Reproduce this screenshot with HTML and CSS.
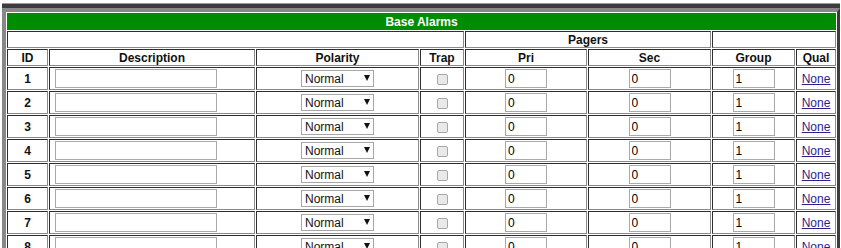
FILE: index.html
```html
<!DOCTYPE html>
<html lang="en">
<head>
    <meta charset="UTF-8">
    <title>Base Alarms</title>
    <link rel="stylesheet" href="styles.css">
</head>
<body>
    <div class="panel">
        <table class="alarms">
            <colgroup>
                <col class="c-id">
                <col class="c-desc">
                <col class="c-pol">
                <col class="c-trap">
                <col class="c-pri">
                <col class="c-sec">
                <col class="c-group">
                <col class="c-qual">
            </colgroup>
            <!-- Headers -->
            <tr class="head">
                <th colspan="8" class="title">Base Alarms</th>
            </tr>
            <tr class="head">
                <th colspan="4"></th>
                <th colspan="2">Pagers</th>
                <th colspan="2"></th>
            </tr>
            <tr class="head">
                <th>ID</th>
                <th>Description</th>
                <th>Polarity</th>
                <th>Trap</th>
                <th>Pri</th>
                <th>Sec</th>
                <th>Group</th>
                <th>Qual</th>
            </tr>

            <!-- Alarm rows -->
            <tr>
                <td class="id">1</td>
                <td class="desc"><input type="text" class="txt wide"></td>
                <td><span class="sel"><select><option>Normal</option><option>Inverted</option></select></span></td>
                <td><input type="checkbox" class="chk" disabled></td>
                <td><input type="text" class="txt" value="0"></td>
                <td><input type="text" class="txt" value="0"></td>
                <td><input type="text" class="txt" value="1"></td>
                <td><a href="#">None</a></td>
            </tr>
            <tr>
                <td class="id">2</td>
                <td class="desc"><input type="text" class="txt wide"></td>
                <td><span class="sel"><select><option>Normal</option><option>Inverted</option></select></span></td>
                <td><input type="checkbox" class="chk" disabled></td>
                <td><input type="text" class="txt" value="0"></td>
                <td><input type="text" class="txt" value="0"></td>
                <td><input type="text" class="txt" value="1"></td>
                <td><a href="#">None</a></td>
            </tr>
            <tr>
                <td class="id">3</td>
                <td class="desc"><input type="text" class="txt wide"></td>
                <td><span class="sel"><select><option>Normal</option><option>Inverted</option></select></span></td>
                <td><input type="checkbox" class="chk" disabled></td>
                <td><input type="text" class="txt" value="0"></td>
                <td><input type="text" class="txt" value="0"></td>
                <td><input type="text" class="txt" value="1"></td>
                <td><a href="#">None</a></td>
            </tr>
            <tr>
                <td class="id">4</td>
                <td class="desc"><input type="text" class="txt wide"></td>
                <td><span class="sel"><select><option>Normal</option><option>Inverted</option></select></span></td>
                <td><input type="checkbox" class="chk" disabled></td>
                <td><input type="text" class="txt" value="0"></td>
                <td><input type="text" class="txt" value="0"></td>
                <td><input type="text" class="txt" value="1"></td>
                <td><a href="#">None</a></td>
            </tr>
            <tr>
                <td class="id">5</td>
                <td class="desc"><input type="text" class="txt wide"></td>
                <td><span class="sel"><select><option>Normal</option><option>Inverted</option></select></span></td>
                <td><input type="checkbox" class="chk" disabled></td>
                <td><input type="text" class="txt" value="0"></td>
                <td><input type="text" class="txt" value="0"></td>
                <td><input type="text" class="txt" value="1"></td>
                <td><a href="#">None</a></td>
            </tr>
            <tr>
                <td class="id">6</td>
                <td class="desc"><input type="text" class="txt wide"></td>
                <td><span class="sel"><select><option>Normal</option><option>Inverted</option></select></span></td>
                <td><input type="checkbox" class="chk" disabled></td>
                <td><input type="text" class="txt" value="0"></td>
                <td><input type="text" class="txt" value="0"></td>
                <td><input type="text" class="txt" value="1"></td>
                <td><a href="#">None</a></td>
            </tr>
            <tr>
                <td class="id">7</td>
                <td class="desc"><input type="text" class="txt wide"></td>
                <td><span class="sel"><select><option>Normal</option><option>Inverted</option></select></span></td>
                <td><input type="checkbox" class="chk" disabled></td>
                <td><input type="text" class="txt" value="0"></td>
                <td><input type="text" class="txt" value="0"></td>
                <td><input type="text" class="txt" value="1"></td>
                <td><a href="#">None</a></td>
            </tr>
            <tr>
                <td class="id">8</td>
                <td class="desc"><input type="text" class="txt wide"></td>
                <td><span class="sel"><select><option>Normal</option><option>Inverted</option></select></span></td>
                <td><input type="checkbox" class="chk" disabled></td>
                <td><input type="text" class="txt" value="0"></td>
                <td><input type="text" class="txt" value="0"></td>
                <td><input type="text" class="txt" value="1"></td>
                <td><a href="#">None</a></td>
            </tr>
        </table>
    </div>
</body>
</html>
```

FILE: styles.css
```css
/* General */
html, body {
    margin: 0;
    padding: 0;
    overflow: hidden;
    background: #fff;
}
body {
    font-family: "Liberation Sans", Arial, sans-serif;
    font-size: 12px;
    color: #111;
}

/* Outer frame */
.panel {
    margin: 4px 1px 0 2px;
    border-top: 4px solid #3c3c3c;
    box-shadow: 0 -1px 0 #9a9a9a;
}

/* Table */
.alarms {
    table-layout: fixed;
    width: 838px;
    border-collapse: separate;
    border-spacing: 1px;
    border-style: solid;
    border-width: 4px 3px 4px 4px;
    border-color: #888 #3c3c3c #3c3c3c #888;
}
.c-id { width: 41px; }
.c-desc { width: 206px; }
.c-pol { width: 163px; }
.c-trap { width: 44px; }
.c-pri { width: 122px; }
.c-sec { width: 123px; }
.c-group { width: 83px; }
.c-qual { width: 40px; }

.alarms th,
.alarms td {
    padding: 0;
    border: 1px solid;
    border-color: #2e2e2e #8a8a8a #8a8a8a #2e2e2e;
    text-align: center;
    vertical-align: middle;
}
.alarms tr {
    height: 23px;
}
.alarms tr.head {
    height: 17px;
}
.alarms th {
    font-weight: bold;
    font-size: 12px;
    color: #111;
}
.alarms th.title {
    background-color: #008c00;
    color: #fff;
    border-color: #008c00;
}
.alarms td.id {
    font-weight: bold;
}
.alarms td.desc {
    text-align: left;
    padding-left: 5px;
}

/* Form controls */
.txt {
    box-sizing: border-box;
    width: 42px;
    height: 19px;
    margin: 0;
    padding: 0 2px;
    border: 1px solid #a9a9a9;
    font-family: "Liberation Sans", Arial, sans-serif;
    font-size: 12px;
    color: #000;
    vertical-align: middle;
}
.txt.wide {
    width: 162px;
}

.sel {
    position: relative;
    display: inline-block;
    vertical-align: middle;
}
.sel select {
    -webkit-appearance: none;
    appearance: none;
    box-sizing: border-box;
    width: 73px;
    height: 17px;
    margin: 0;
    padding: 0 0 0 3px;
    border: 1px solid #a6a6a6;
    border-radius: 0;
    background: #fff;
    font-family: "Liberation Sans", Arial, sans-serif;
    font-size: 12px;
    color: #111;
    display: block;
}
.sel::after {
    content: "";
    position: absolute;
    right: 4px;
    top: 5px;
    border-left: 3.5px solid transparent;
    border-right: 3.5px solid transparent;
    border-top: 6px solid #111;
    pointer-events: none;
}

.chk {
    -webkit-appearance: none;
    appearance: none;
    box-sizing: border-box;
    width: 11px;
    height: 11px;
    margin: 0;
    border: 1px solid #a8a8a8;
    border-radius: 2px;
    background: #e9e9e9;
    vertical-align: middle;
}

.alarms a {
    color: #2c1e8e;
    text-decoration: underline;
}
```
